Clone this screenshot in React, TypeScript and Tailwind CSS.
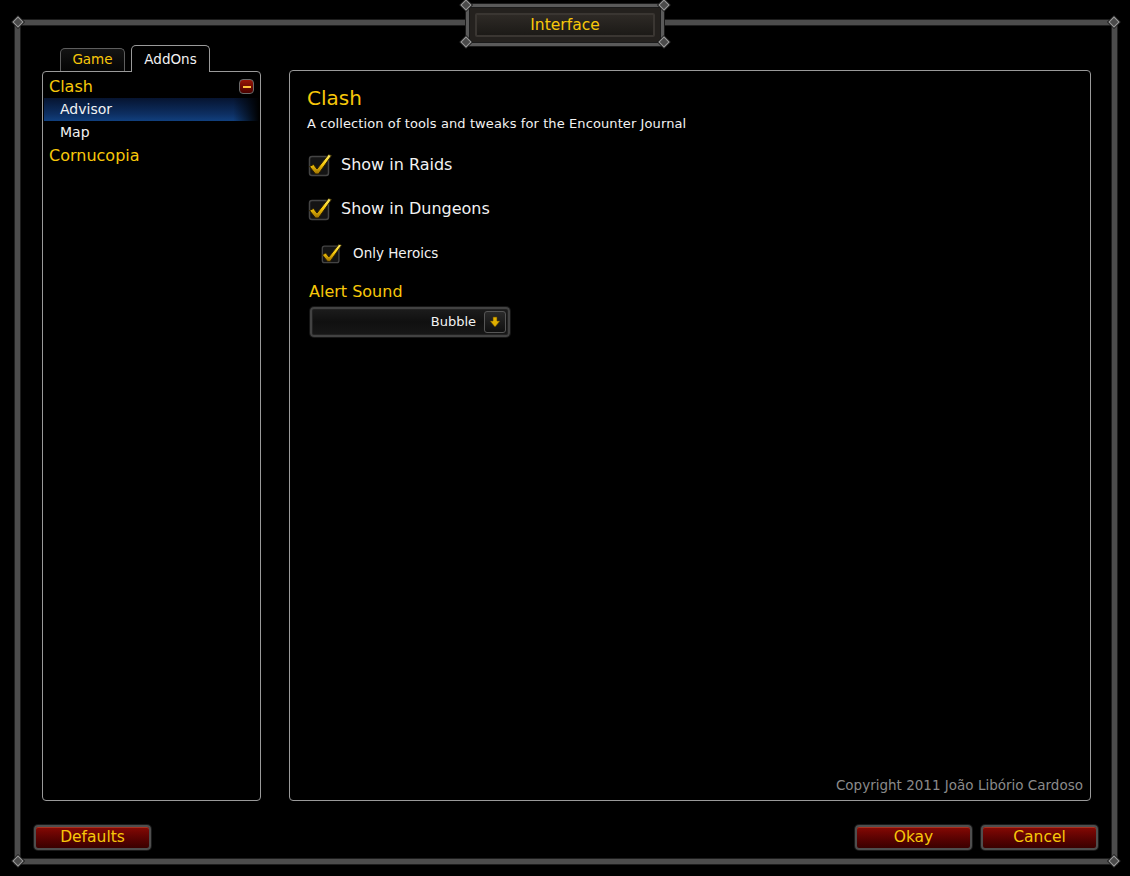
import React from "react";

const GOLD = "text-[#f8c80a]";

function Diamond({ className }: { className: string }) {
  // little studs sitting on the frame corners
  return (
    <div
      className={`absolute w-[8px] h-[8px] rotate-45 bg-[#4a4a4a] border border-[#9a9a9a] shadow-[0_0_0_1px_#1a1a1a] ${className}`}
    />
  );
}

function Check({ size = 24 }: { size?: number }) {
  return (
    <svg width={size} height={size} viewBox="0 0 24 24" className="shrink-0">
      <defs>
        <linearGradient id="chk" x1="0" y1="0" x2="0" y2="1">
          <stop offset="0" stopColor="#fff06a" />
          <stop offset="0.5" stopColor="#f8c80a" />
          <stop offset="1" stopColor="#9a6e00" />
        </linearGradient>
      </defs>
      <rect x="1.5" y="3.5" width="19" height="19" rx="2.5" fill="#141414" stroke="#444" strokeWidth="1.5" />
      <path
        d="M1.5 13.5 L5.5 11.5 L9 16 L20.5 1.5 L23.5 2.5 L10.5 21 L7.5 21 Z"
        fill="url(#chk)"
        stroke="#2a1e00"
        strokeWidth="1"
        strokeLinejoin="round"
      />
    </svg>
  );
}

function CheckRow({ label, small }: { label: string; small?: boolean }) {
  return (
    <div className="flex items-center">
      <Check size={small ? 21 : 24} />
      <span
        className={`text-[#f2f2f2] ${small ? "ml-[11px] text-[13.5px]" : "ml-[9px] text-[16px]"}`}
      >
        {label}
      </span>
    </div>
  );
}

function RedButton({ label }: { label: string }) {
  return (
    <button
      className={`h-[25px] w-[117px] rounded-[4px] border-2 border-[#4e4e4e] shadow-[0_0_0_1px_#1a1a1a,inset_0_1px_0_#a8301e] bg-gradient-to-b from-[#860a04] via-[#5e0302] to-[#3a0000] text-[15.5px] leading-none ${GOLD}`}
    >
      {label}
    </button>
  );
}

function Tab({ label, active }: { label: string; active?: boolean }) {
  return active ? (
    <div className="relative z-10 -mb-px h-[27px] w-[79px] rounded-t-[5px] border border-b-0 border-[#9a9a9a] bg-black flex items-center justify-center text-[13.5px] text-[#f2f2f2]">
      {label}
    </div>
  ) : (
    <div className={`h-[23px] w-[65px] rounded-t-[5px] border border-b-0 border-[#5e5e5e] bg-gradient-to-b from-[#141414] to-[#050505] flex items-center justify-center pb-[1px] text-[13.5px] ${GOLD}`}>
      {label}
    </div>
  );
}

export default function App() {
  return (
    <div
      className="relative w-[1130px] h-[876px] overflow-hidden bg-black pt-[20px] pl-[15px]"
      style={{ fontFamily: '"DejaVu Sans", Verdana, sans-serif' }}
    >
      {/* outer frame */}
      <div className="w-[1102px] h-[844px] border-[5px] border-[#4c4c4c] shadow-[0_0_0_1px_#1e1e1e,inset_0_0_0_1px_#1e1e1e] flex flex-col">
        <div className="flex pt-[20px] pl-[22px]">
          {/* category list column */}
          <div className="w-[219px] flex flex-col">
            <div className="h-[26px] flex items-end pl-[18px] gap-[6px]">
              <Tab label="Game" />
              <Tab label="AddOns" active />
            </div>
            <div className="h-[730px] rounded-[4px] border border-[#9a9a9a] pt-[3px] px-px">
              <div className="h-[23px] flex items-center justify-between pl-[5px] pr-[5px]">
                <span className={`text-[16px] ${GOLD}`}>Clash</span>
                <span className="w-[15px] h-[15px] rounded-[4px] border border-[#6a6a6a] bg-gradient-to-b from-[#9a1608] to-[#4a0200] flex items-center justify-center">
                  <span className="w-[8px] h-[2px] bg-[#ffc23a]" />
                </span>
              </div>
              <div className="h-[23px] flex items-center pl-[16px] text-[14px] text-[#f2f2f2] bg-[linear-gradient(to_right,transparent_88%,#000),linear-gradient(to_bottom,#061430,#0d2f62_70%,#11407e)]">
                Advisor
              </div>
              <div className="h-[23px] flex items-center pl-[16px] text-[14px] text-[#f2f2f2]">
                Map
              </div>
              <div className={`h-[23px] flex items-center pl-[5px] text-[16px] ${GOLD}`}>
                Cornucopia
              </div>
            </div>
          </div>

          {/* options panel */}
          <div className="ml-[28px] mt-[25px] w-[802px] h-[731px] rounded-[4px] border border-[#9a9a9a] flex flex-col pt-[15px] pl-[17px] pr-[7px] pb-[5px]">
            <div className={`text-[20px] leading-[24px] ${GOLD}`}>Clash</div>
            <div className="mt-[6px] text-[13px] leading-[16px] tracking-[0.1px] text-[#f2f2f2]">
              A collection of tools and tweaks for the Encounter Journal
            </div>
            <div className="mt-[21px] ml-[1px]">
              <CheckRow label="Show in Raids" />
            </div>
            <div className="mt-[20px] ml-[1px]">
              <CheckRow label="Show in Dungeons" />
            </div>
            <div className="mt-[22px] ml-[14px]">
              <CheckRow label="Only Heroics" small />
            </div>
            <div className={`mt-[18px] ml-[2px] text-[16px] leading-[20px] ${GOLD}`}>Alert Sound</div>
            <div className="mt-[5px] ml-[3px] w-[200px] h-[30px] rounded-[4px] border-2 border-[#424242] shadow-[0_0_0_1px_#161616,inset_0_0_0_1px_#222] bg-gradient-to-b from-[#1c1c1c] via-[#101010] to-[#171717] flex items-center justify-end pr-[2px]">
              <span className="text-[13px] text-[#f2f2f2] mr-[8px]">Bubble</span>
              <span className="w-[22px] h-[22px] rounded-[3px] border border-[#555] bg-gradient-to-b from-[#2a2a2a] to-[#101010] flex items-center justify-center">
                <svg width="12" height="12" viewBox="0 0 12 12">
                  <path d="M4 1 H8 V5 H11 L6 11 L1 5 H4 Z" fill="#e0b000" stroke="#5a4200" strokeWidth="0.6" />
                </svg>
              </span>
            </div>
            <div className="mt-auto self-end text-[13.5px] text-[#8a8a8a]">
              Copyright 2011 João Libório Cardoso
            </div>
          </div>
        </div>

        {/* bottom buttons */}
        <div className="mt-[24px] flex items-center px-[14px]">
          <RedButton label="Defaults" />
          <div className="ml-auto flex gap-[9px]">
            <RedButton label="Okay" />
            <RedButton label="Cancel" />
          </div>
        </div>
      </div>

      <Diamond className="left-[14px] top-[18px]" />
      <Diamond className="left-[1110px] top-[18px]" />
      <Diamond className="left-[14px] top-[857px]" />
      <Diamond className="left-[1110px] top-[857px]" />

      {/* title plaque over the top edge */}
      <div className="absolute left-[466px] top-[4px] w-[198px] h-[42px] rounded-[3px] border-[3px] border-[#5a5a5a] shadow-[0_0_0_1px_#1a1a1a,inset_0_0_0_1px_#1a1a1a] bg-[#24211e] p-[6px]">
        <div className="w-full h-full rounded-[2px] border-2 border-[#3a3632] bg-gradient-to-b from-[#2e2a26] to-[#1c1a17] flex items-center justify-center pt-[1px]">
          <span className={`text-[15.5px] ${GOLD}`}>Interface</span>
        </div>
      </div>
      <Diamond className="left-[462px] top-[1px]" />
      <Diamond className="left-[660px] top-[1px]" />
      <Diamond className="left-[462px] top-[38px]" />
      <Diamond className="left-[660px] top-[38px]" />
    </div>
  );
}
